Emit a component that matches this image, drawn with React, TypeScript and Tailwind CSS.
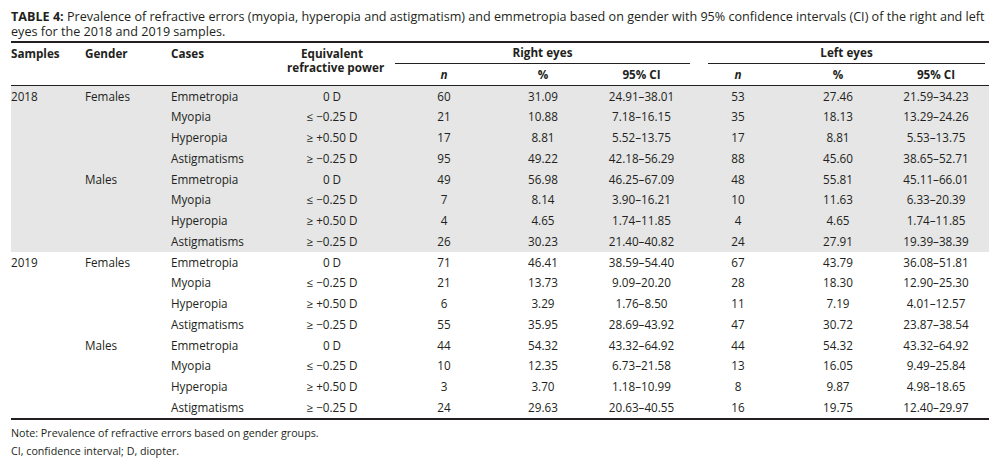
import React from "react";

type Row = { year?: string; gender?: string; c: string; eq: string; rn: string; rp: string; rci: string; ln: string; lp: string; lci: string };

const g2018: Row[] = [
  { year: "2018", gender: "Females", c: "Emmetropia", eq: "0 D", rn: "60", rp: "31.09", rci: "24.91–38.01", ln: "53", lp: "27.46", lci: "21.59–34.23" },
  { c: "Myopia", eq: "≤ −0.25 D", rn: "21", rp: "10.88", rci: "7.18–16.15", ln: "35", lp: "18.13", lci: "13.29–24.26" },
  { c: "Hyperopia", eq: "≥ +0.50 D", rn: "17", rp: "8.81", rci: "5.52–13.75", ln: "17", lp: "8.81", lci: "5.53–13.75" },
  { c: "Astigmatisms", eq: "≥ −0.25 D", rn: "95", rp: "49.22", rci: "42.18–56.29", ln: "88", lp: "45.60", lci: "38.65–52.71" },
  { gender: "Males", c: "Emmetropia", eq: "0 D", rn: "49", rp: "56.98", rci: "46.25–67.09", ln: "48", lp: "55.81", lci: "45.11–66.01" },
  { c: "Myopia", eq: "≤ −0.25 D", rn: "7", rp: "8.14", rci: "3.90–16.21", ln: "10", lp: "11.63", lci: "6.33–20.39" },
  { c: "Hyperopia", eq: "≥ +0.50 D", rn: "4", rp: "4.65", rci: "1.74–11.85", ln: "4", lp: "4.65", lci: "1.74–11.85" },
  { c: "Astigmatisms", eq: "≥ −0.25 D", rn: "26", rp: "30.23", rci: "21.40–40.82", ln: "24", lp: "27.91", lci: "19.39–38.39" },
];

const g2019: Row[] = [
  { year: "2019", gender: "Females", c: "Emmetropia", eq: "0 D", rn: "71", rp: "46.41", rci: "38.59–54.40", ln: "67", lp: "43.79", lci: "36.08–51.81" },
  { c: "Myopia", eq: "≤ −0.25 D", rn: "21", rp: "13.73", rci: "9.09–20.20", ln: "28", lp: "18.30", lci: "12.90–25.30" },
  { c: "Hyperopia", eq: "≥ +0.50 D", rn: "6", rp: "3.29", rci: "1.76–8.50", ln: "11", lp: "7.19", lci: "4.01–12.57" },
  { c: "Astigmatisms", eq: "≥ −0.25 D", rn: "55", rp: "35.95", rci: "28.69–43.92", ln: "47", lp: "30.72", lci: "23.87–38.54" },
  { gender: "Males", c: "Emmetropia", eq: "0 D", rn: "44", rp: "54.32", rci: "43.32–64.92", ln: "44", lp: "54.32", lci: "43.32–64.92" },
  { c: "Myopia", eq: "≤ −0.25 D", rn: "10", rp: "12.35", rci: "6.73–21.58", ln: "13", lp: "16.05", lci: "9.49–25.84" },
  { c: "Hyperopia", eq: "≥ +0.50 D", rn: "3", rp: "3.70", rci: "1.18–10.99", ln: "8", lp: "9.87", lci: "4.98–18.65" },
  { c: "Astigmatisms", eq: "≥ −0.25 D", rn: "24", rp: "29.63", rci: "20.63–40.55", ln: "16", lp: "19.75", lci: "12.40–29.97" },
];

const cols =
  "grid grid-cols-[74px_86px_116px_90px_18px_98px_100px_97px_18px_60px_140px_56px_21px]";

function C({ children }: { children?: React.ReactNode }) {
  return <div className="flex items-center justify-center whitespace-nowrap">{children}</div>;
}
function L({ children }: { children?: React.ReactNode }) {
  return <div className="flex items-center whitespace-nowrap">{children}</div>;
}

function DataRow({ r }: { r: Row }) {
  return (
    <div className={`${cols} h-[20.75px]`}>
      <L>{r.year}</L>
      <L>{r.gender}</L>
      <L>{r.c}</L>
      <C>{r.eq}</C>
      <div />
      <C>{r.rn}</C>
      <C>{r.rp}</C>
      <C>{r.rci}</C>
      <div />
      <C>{r.ln}</C>
      <C>{r.lp}</C>
      <C>{r.lci}</C>
      <div />
    </div>
  );
}

export default function App() {
  return (
    <div className="w-[1000px] h-[469px] bg-white text-[#231f20] font-['Open_Sans',sans-serif] overflow-hidden">
      <div className="pt-[9px] px-[11px]">
        <p className="text-[12.6px] leading-[15px] whitespace-nowrap">
          <span className="font-bold">TABLE 4:</span> Prevalence of refractive errors (myopia, hyperopia and astigmatism) and emmetropia based on gender with 95% confidence intervals (CI) of the right and left
          <br />
          eyes for the 2018 and 2019 samples.
        </p>
        <div className="mt-[2px] border-t-2 border-b border-[#231f20] text-[11.7px]">
          <div className={`${cols} grid-rows-[21px_21px] font-bold`}>
            <div className="row-span-2 pt-[3px] leading-[15px]">Samples</div>
            <div className="row-span-2 pt-[3px] leading-[15px]">Gender</div>
            <div className="row-span-2 pt-[3px] leading-[15px]">Cases</div>
            <div className="row-span-2 pt-[3px] leading-[14px] text-center whitespace-nowrap">
              Equivalent
              <br />
              refractive power
            </div>
            <div className="row-span-2" />
            <div className="col-span-3 border-b border-[#231f20] flex items-center justify-center">Right eyes</div>
            <div className="row-span-2" />
            <div className="col-span-4 border-b border-[#231f20] flex items-center justify-center">Left eyes</div>
            <C><span className="italic">n</span></C>
            <C>%</C>
            <C>95% CI</C>
            <C><span className="italic">n</span></C>
            <C>%</C>
            <C>95% CI</C>
            <div />
          </div>
        </div>
        <div className="text-[11.7px]">
          <div className="bg-[#e6e6e6] h-[166px]">
            {g2018.map((r, i) => (
              <DataRow key={i} r={r} />
            ))}
          </div>
          <div className="h-[166px] border-b-2 border-[#231f20] box-content">
            {g2019.map((r, i) => (
              <DataRow key={i} r={r} />
            ))}
          </div>
        </div>
        <div className="mt-[4px] text-[10.7px] leading-[18px]">
          <p>Note: Prevalence of refractive errors based on gender groups.</p>
          <p>CI, confidence interval; D, diopter.</p>
        </div>
      </div>
    </div>
  );
}
